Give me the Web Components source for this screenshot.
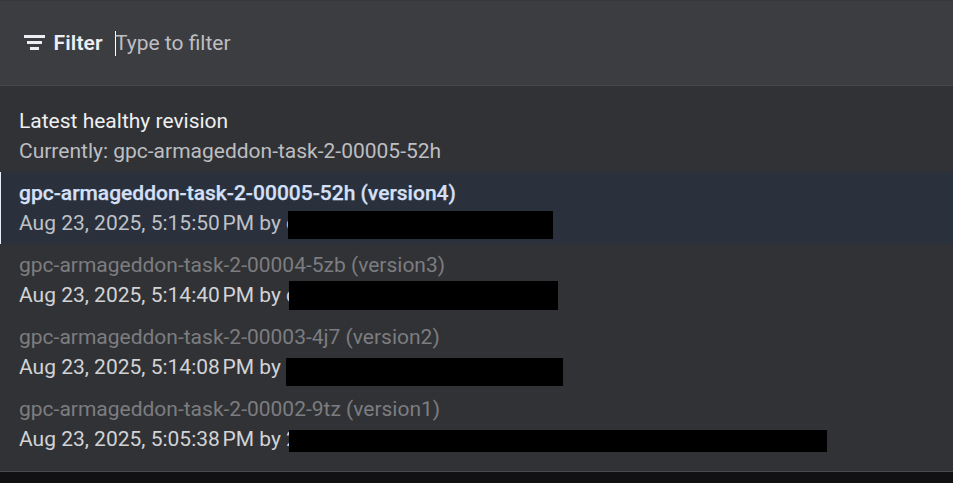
<!DOCTYPE html>
<html lang="en"><head><meta charset="utf-8"><title>Revisions</title>
<style>body{margin:0;background:#313235;overflow:hidden}</style></head><body>
<revision-picker></revision-picker>
<script>
class FilterBar extends HTMLElement{constructor(){super();this.attachShadow({mode:'open'}).innerHTML=`<style>
:host{display:flex;align-items:center;box-sizing:border-box;height:86px;padding:0 24px;background:#3c3d40;border-top:1px solid #36373a;border-bottom:1px solid #454649;color:#e8eaed}
svg{width:21px;height:15px;margin:-2px 8.5px 0 0;display:block}
b{font-weight:600;width:61.5px;letter-spacing:.15px;color:#eceef3}
i{width:1px;height:25px;background:#fff}
span{color:#bdbec2;margin-left:-1px}
</style><svg viewBox="0 0 21 15" fill="#eceef3"><path d="M0 0h21v3H0zM3 6h15v3H3zM6 12h9v3H6z"/></svg><b>Filter</b><i></i><span>Type to filter</span>`}}
customElements.define('filter-bar',FilterBar);
class RevisionItem extends HTMLElement{constructor(){super();this.attachShadow({mode:'open'}).innerHTML=`<style>
:host{display:block;box-sizing:border-box;height:72px;padding:6px 0 0 19px;line-height:30px;color:#d2d3d6;white-space:nowrap}
.t{color:#7c7d80}
:host([head]){color:#bdbec1}
:host([head]) .t{color:#eeeff1}
:host([selected]){background:#2a303c;border-left:1px solid #e4edfc;padding-left:18px;color:#bfc1c7}
:host([selected]) .t{color:#d5e0f8;font-weight:500;-webkit-text-stroke:.25px #d5e0f8}
.m{display:flex}
</style><div class="t"><slot name="title"></slot></div><div class="m"><slot></slot></div>`}}
customElements.define('revision-item',RevisionItem);
class RedactedText extends HTMLElement{connectedCallback(){this.attachShadow({mode:'open'}).innerHTML=`<style>:host{display:block;position:relative;flex:none;background:#000;width:${this.getAttribute('w')}px;height:${this.getAttribute('h')}px;margin-top:${this.getAttribute('top')}px}</style>`}}
customElements.define('redacted-text',RedactedText);
class RevisionPicker extends HTMLElement{constructor(){super();this.attachShadow({mode:'open'}).innerHTML=`<style>
:host{display:block;height:483px;font:400 21px Roboto,sans-serif;background:#313235}
main{box-sizing:border-box;height:386px;padding-top:14px;border-bottom:1px solid #4a4b4e}
footer{height:11px;background:#111113}
.by{flex:none;width:270px}
.by.sel{width:269px}
.by.short{width:267px}
</style><filter-bar></filter-bar><main>
<revision-item head><span slot="title">Latest healthy revision</span>Currently: gpc-armageddon-task-2-00005-52h</revision-item>
<revision-item selected><span slot="title">gpc-armageddon-task-2-00005-52h (version4)</span><span class="by sel">Aug 23, 2025, 5:15:50&#x202f;PM by c</span><redacted-text w="265" h="28" top="3"></redacted-text></revision-item>
<revision-item><span slot="title">gpc-armageddon-task-2-00004-5zb (version3)</span><span class="by">Aug 23, 2025, 5:14:40&#x202f;PM by c</span><redacted-text w="269" h="29" top="1"></redacted-text></revision-item>
<revision-item><span slot="title">gpc-armageddon-task-2-00003-4j7 (version2)</span><span class="by short">Aug 23, 2025, 5:14:08&#x202f;PM by</span><redacted-text w="277" h="28" top="6"></redacted-text></revision-item>
<revision-item><span slot="title">gpc-armageddon-task-2-00002-9tz (version1)</span><span class="by">Aug 23, 2025, 5:05:38&#x202f;PM by 2</span><redacted-text w="538" h="22" top="6"></redacted-text></revision-item>
</main><footer></footer>`}}
customElements.define('revision-picker',RevisionPicker);
</script></body></html>
